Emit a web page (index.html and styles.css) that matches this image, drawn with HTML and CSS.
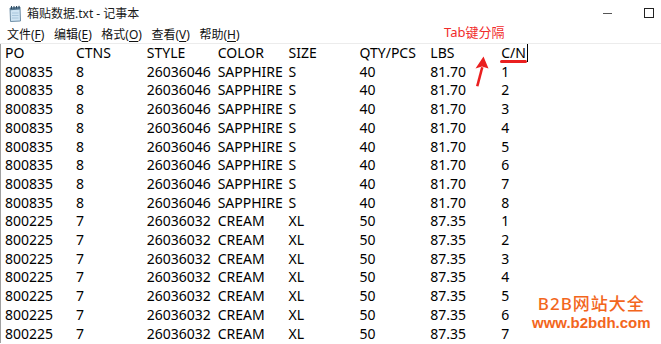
FILE: index.html
```html
<!DOCTYPE html>
<html lang="zh-CN">
<head>
    <meta charset="UTF-8">
    <title>箱贴数据.txt - 记事本</title>
    <link rel="stylesheet" href="styles.css">
</head>
<body>
    <div class="window">
        <!-- title bar -->
        <div class="titlebar">
            <svg class="app-icon" width="14" height="17" viewBox="0 0 14 17">
                <path d="M2 3 L12 2 L12.5 16 L2.5 16.5 Z" fill="#cfe4f3" stroke="#6f8ea6" stroke-width="1"/>
                <path d="M2 3 L12 2 L12 4.5 L2.2 5.3 Z" fill="#53758f"/>
                <path d="M4 8 H10.5 M4 10.5 H10.5 M4 13 H10.5" stroke="#a9c6dc" stroke-width="1"/>
                <path d="M3.5 1 V4 M6 1 V3.8 M8.5 1 V3.5 M11 0.8 V3.2" stroke="#2f4a60" stroke-width="1"/>
            </svg>
            <span class="title">箱贴数据.txt - 记事本</span>
            <div class="controls">
                <span class="btn"><i class="min"></i></span>
                <span class="btn"><i class="max"></i></span>
                <span class="btn"></span>
            </div>
        </div>

        <!-- menu -->
        <div class="menubar">
            <span>文件(<u>F</u>)</span>
            <span>编辑(<u>E</u>)</span>
            <span>格式(<u>O</u>)</span>
            <span>查看(<u>V</u>)</span>
            <span>帮助(<u>H</u>)</span>
        </div>

        <!-- text area, one row per line, columns at the tab stops -->
        <div class="editor">
            <div class="row"><span>PO</span><span>CTNS</span><span>STYLE</span><span>COLOR</span><span>SIZE</span><span>QTY/PCS</span><span>LBS</span><span><span class="cn">C/N</span><span class="caret"></span></span></div>
            <div class="row"><span>800835</span><span>8</span><span>26036046</span><span>SAPPHIRE</span><span>S</span><span>40</span><span>81.70</span><span>1</span></div>
            <div class="row"><span>800835</span><span>8</span><span>26036046</span><span>SAPPHIRE</span><span>S</span><span>40</span><span>81.70</span><span>2</span></div>
            <div class="row"><span>800835</span><span>8</span><span>26036046</span><span>SAPPHIRE</span><span>S</span><span>40</span><span>81.70</span><span>3</span></div>
            <div class="row"><span>800835</span><span>8</span><span>26036046</span><span>SAPPHIRE</span><span>S</span><span>40</span><span>81.70</span><span>4</span></div>
            <div class="row"><span>800835</span><span>8</span><span>26036046</span><span>SAPPHIRE</span><span>S</span><span>40</span><span>81.70</span><span>5</span></div>
            <div class="row"><span>800835</span><span>8</span><span>26036046</span><span>SAPPHIRE</span><span>S</span><span>40</span><span>81.70</span><span>6</span></div>
            <div class="row"><span>800835</span><span>8</span><span>26036046</span><span>SAPPHIRE</span><span>S</span><span>40</span><span>81.70</span><span>7</span></div>
            <div class="row"><span>800835</span><span>8</span><span>26036046</span><span>SAPPHIRE</span><span>S</span><span>40</span><span>81.70</span><span>8</span></div>
            <div class="row"><span>800225</span><span>7</span><span>26036032</span><span>CREAM</span><span>XL</span><span>50</span><span>87.35</span><span>1</span></div>
            <div class="row"><span>800225</span><span>7</span><span>26036032</span><span>CREAM</span><span>XL</span><span>50</span><span>87.35</span><span>2</span></div>
            <div class="row"><span>800225</span><span>7</span><span>26036032</span><span>CREAM</span><span>XL</span><span>50</span><span>87.35</span><span>3</span></div>
            <div class="row"><span>800225</span><span>7</span><span>26036032</span><span>CREAM</span><span>XL</span><span>50</span><span>87.35</span><span>4</span></div>
            <div class="row"><span>800225</span><span>7</span><span>26036032</span><span>CREAM</span><span>XL</span><span>50</span><span>87.35</span><span>5</span></div>
            <div class="row"><span>800225</span><span>7</span><span>26036032</span><span>CREAM</span><span>XL</span><span>50</span><span>87.35</span><span>6</span></div>
            <div class="row"><span>800225</span><span>7</span><span>26036032</span><span>CREAM</span><span>XL</span><span>50</span><span>87.35</span><span>7</span></div>
        </div>

        <!-- red annotation -->
        <div class="note">Tab键分隔</div>
        <svg class="arrow" width="20" height="34" viewBox="0 0 20 34">
            <path d="M4 32 L9 13 L11.5 13.5 L6.5 32.5 Z" fill="#ea1f1f"/>
            <path d="M11.5 2.5 L3.5 14.5 L10 12.5 L16.5 14.5 Z" fill="#ea1f1f"/>
        </svg>

        <!-- watermark -->
        <div class="watermark">
            <div class="wm-name">B2B网站大全</div>
            <div class="wm-url">www.b2bdh.com</div>
        </div>
    </div>
</body>
</html>
```

FILE: styles.css
```css
body {
    margin: 0;
    background: #fff;
    font-family: "Noto Sans", "Noto Sans CJK SC", sans-serif;
}

.window {
    position: relative;
    width: 661px;
    height: 344px;
    overflow: hidden;
    background: #fff;
    color: #000;
}

/* title bar */
.titlebar {
    display: flex;
    align-items: center;
    height: 26px;
    padding-left: 8px;
}

.app-icon {
    flex: none;
    margin-right: 5px;
}

.title {
    font-size: 12px;
    color: #1a1a1a;
}

.controls {
    display: flex;
    margin-left: auto;
    margin-right: -49px;
}

.controls .btn {
    display: flex;
    align-items: center;
    justify-content: center;
    width: 41px;
    height: 26px;
}

.controls .min {
    display: block;
    width: 9px;
    height: 1px;
    background: #555;
}

.controls .max {
    display: block;
    width: 8px;
    height: 8px;
    border: 1px solid #222;
    margin-top: -1px;
}

/* menu */
.menubar {
    display: flex;
    gap: 9.5px;
    height: 17px;
    line-height: 17px;
    padding-left: 7px;
    font-size: 12px;
    color: #111;
    border-bottom: 1px solid #ececec;
}

.menubar u {
    text-underline-offset: 2px;
}

/* text area */
.editor {
    border-left: 1px solid #a0a0a0;
    padding-left: 4px;
    font-size: 14px;
    line-height: 18.7px;
    white-space: nowrap;
}

.row {
    display: grid;
    grid-template-columns: repeat(7, 70.9px) auto;
}

.cn {
    position: relative;
}

.cn::after {
    content: "";
    position: absolute;
    left: -1px;
    right: -1px;
    bottom: -1px;
    height: 3px;
    border-radius: 2px;
    background: #ea1f1f;
}

.caret {
    display: inline-block;
    width: 1px;
    height: 18px;
    margin-left: 1px;
    vertical-align: top;
    background: #000;
}

/* annotation over the text */
.note {
    position: absolute;
    left: 444px;
    top: 22px;
    font-size: 13px;
    color: #f12b2b;
}

.arrow {
    position: absolute;
    left: 472px;
    top: 54px;
}

.watermark {
    position: absolute;
    left: 532px;
    top: 293px;
    text-align: center;
    color: #f3661c;
}

.wm-name {
    font-size: 17px;
    font-weight: 500;
    letter-spacing: 1px;
    line-height: 21px;
}

.wm-url {
    font-family: "Liberation Sans", sans-serif;
    font-weight: bold;
    font-size: 15px;
    line-height: 17px;
}
```
